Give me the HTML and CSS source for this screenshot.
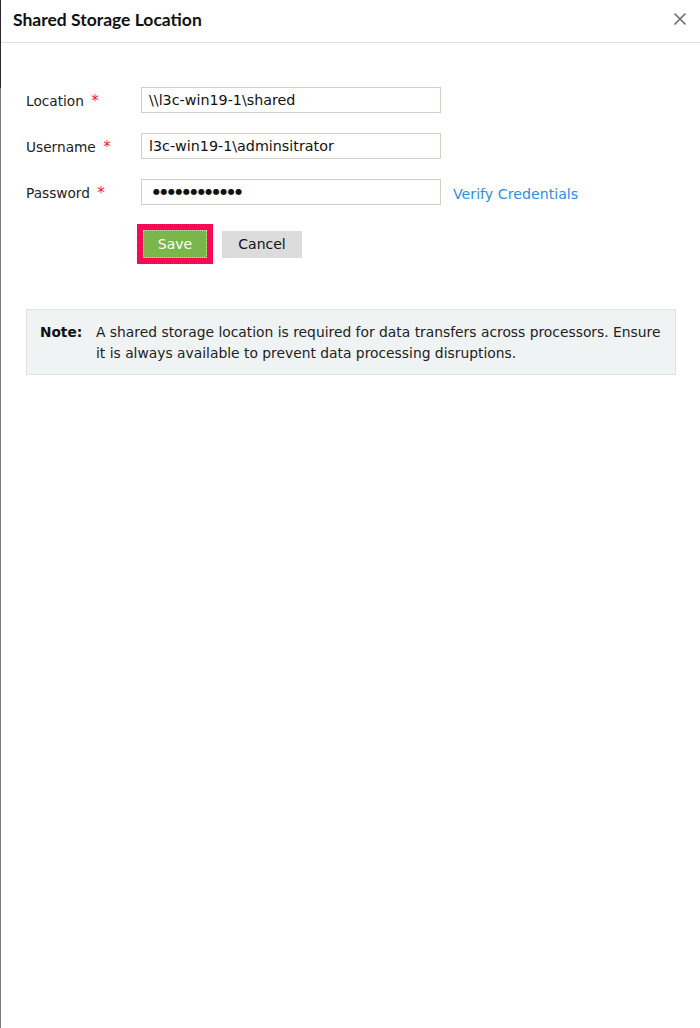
FILE: index.html
```html
<!DOCTYPE html>
<html>
<head>
<meta charset="utf-8">
<link rel="stylesheet" href="styles.css">
</head>
<body>
<div class="page">
  <div class="edge"></div>
  <div class="panel">
    <header class="header">
      <h1 class="title">Shared Storage Location</h1>
      <button class="close" aria-label="Close">
        <svg width="14" height="14" viewBox="0 0 14 14"><path d="M1.5 1.5 L12.5 12.5 M12.5 1.5 L1.5 12.5" stroke="#6b6b6b" stroke-width="1.6" fill="none"/></svg>
      </button>
    </header>
    <div class="body">
      <div class="form">
        <div class="row">
          <label class="label">Location <span class="req">*</span></label>
          <div class="input">\\l3c-win19-1\shared</div>
        </div>
        <div class="row">
          <label class="label">Username <span class="req">*</span></label>
          <div class="input">l3c-win19-1\adminsitrator</div>
        </div>
        <div class="row">
          <label class="label">Password <span class="req">*</span></label>
          <div class="input dots">●●●●●●●●●●●●</div>
          <a class="verify">Verify Credentials</a>
        </div>
        <div class="actions">
          <span class="highlight"><button class="btn save">Save</button></span>
          <button class="btn cancel">Cancel</button>
        </div>
      </div>
      <div class="note">
        <span class="note-label">Note:</span>
        <p class="note-text">A shared storage location is required for data transfers across processors. Ensure<br>it is always available to prevent data processing disruptions.</p>
      </div>
    </div>
  </div>
</div>
</body>
</html>
```

FILE: styles.css
```css
html, body {
  margin: 0;
  padding: 0;
  background: #ffffff;
}
.page {
  display: flex;
  min-height: 1028px;
}
.edge {
  width: 1px;
  flex: none;
  background: linear-gradient(to bottom, #2a2a2a 0, #2a2a2a 88px, #7a7a7a 88px, #7a7a7a 100%);
}
.panel {
  flex: 1;
  background: #fff;
}
.header {
  height: 42px;
  border-bottom: 1px solid #dedede;
  display: flex;
  align-items: center;
  justify-content: space-between;
  padding: 0 13px 0 12px;
  box-sizing: content-box;
}
.title {
  margin: 0 0 3px 0;
  font-family: Lato, "Open Sans", sans-serif;
  font-weight: 700;
  font-size: 17.5px;
  color: #111;
}
.close {
  background: none;
  border: 0;
  padding: 0;
  width: 14px;
  height: 14px;
  display: flex;
  margin-bottom: 4px;
}
.body {
  padding: 44px 23px 0 25px;
  font-family: "DejaVu Sans", Verdana, sans-serif;
  font-size: 13.7px;
  color: #222;
}
.form {
  display: flex;
  flex-direction: column;
  gap: 20px;
}
.row {
  display: flex;
  align-items: center;
  height: 26px;
}
.label {
  width: 115px;
  flex: none;
  font-size: 13.7px;
  color: #222;
  padding-top: 2px;
}
.req {
  color: #e8173c;
  font-size: 15px;
  margin-left: 3px;
}
.input {
  width: 284px;
  height: 24px;
  border: 1px solid #d4d0c8;
  padding: 0 7px;
  line-height: 24px;
  font-size: 14.3px;
  color: #111;
  flex: none;
  white-space: nowrap;
  overflow: hidden;
}
.dots {
  font-size: 8px;
  letter-spacing: 0.5px;
  padding-left: 11px;
  width: 280px;
}
.verify {
  margin-left: 12px;
  color: #2f8fdc;
  font-size: 14.2px;
  padding-top: 4px;
}
.actions {
  display: flex;
  align-items: center;
  gap: 9px;
  margin-top: -1px;
  padding-left: 111px;
}
.highlight {
  border: 6px solid #f50a55;
  display: flex;
}
.btn {
  font-family: "DejaVu Sans", Verdana, sans-serif;
  font-size: 14px;
  border: 0;
  padding: 0;
  margin: 0;
}
.save {
  width: 64px;
  height: 28px;
  background: #7ab648;
  color: #fff;
  border: 1px dotted #cfe3bd;
}
.cancel {
  width: 80px;
  height: 27px;
  background: #dcdcdc;
  color: #111;
}
.note {
  margin-top: 45px;
  width: 650px;
  box-sizing: border-box;
  background: #eff3f3;
  border: 1px solid #dfe3e3;
  display: flex;
  padding: 12px 14px 10px 13px;
}
.note-label {
  font-weight: 700;
  width: 56px;
  flex: none;
  color: #111;
  line-height: 21px;
}
.note-text {
  margin: 0;
  line-height: 21px;
  color: #222;
  font-size: 13.85px;
  white-space: nowrap;
}
```
